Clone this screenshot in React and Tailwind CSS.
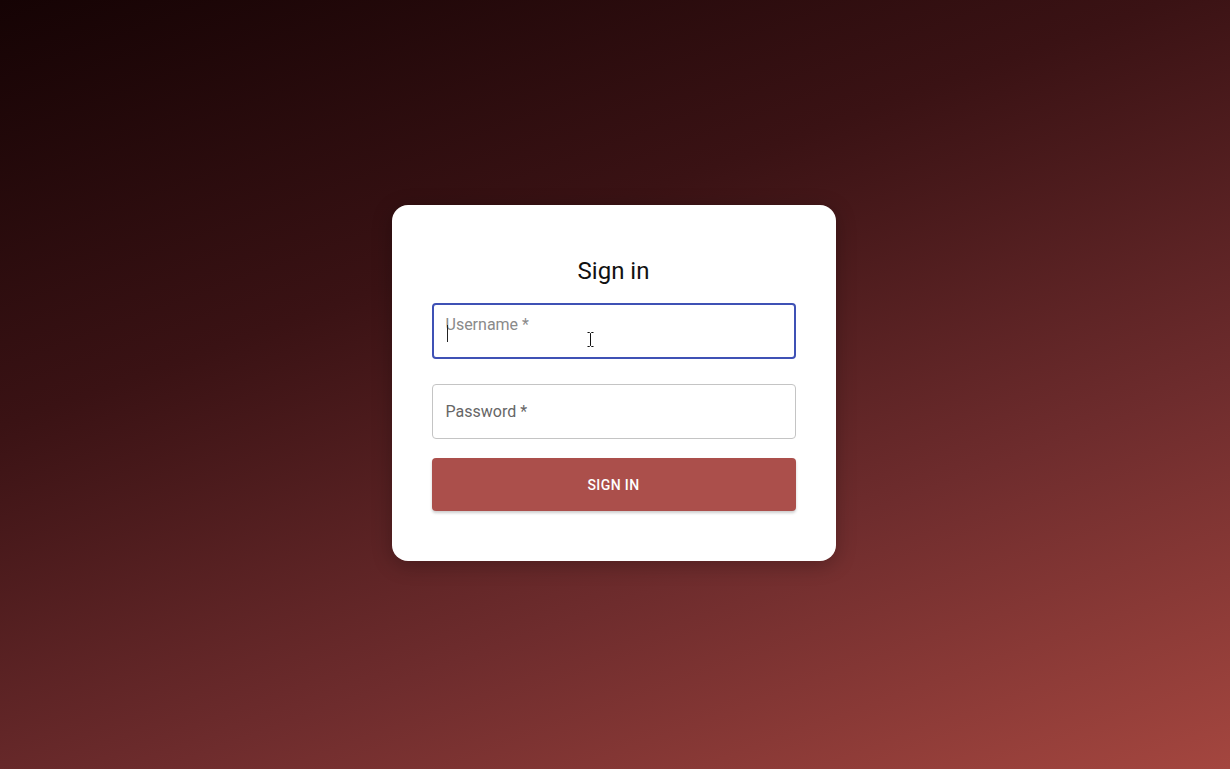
import React from "react";

const App = () => {
  return (
    <div
      className="w-full h-[769px] flex items-center justify-center pb-1 pr-[3px] bg-[linear-gradient(160deg,#150304_0%,#3a1214_35%,#6e2c2d_68%,#a4463f_100%)]"
      style={{ fontFamily: "Roboto, 'Liberation Sans', sans-serif" }}
    >
      <div className="w-[444px] h-[356px] bg-white rounded-2xl px-10 pt-[50px] flex flex-col shadow-[0_4px_20px_rgba(0,0,0,0.25)]">
        <h1 className="text-[24px] leading-8 text-center text-[#111] font-normal">Sign in</h1>

        {/* username (focused) */}
        <div className="relative mt-4 h-14 rounded border-2 border-[#3f51b5]">
          <span className="absolute left-[12px] top-[10px] text-[16px] leading-5 text-[#8a8a8a]">Username *</span>
          <span className="absolute left-[13px] top-[20px] w-px h-[17px] bg-[#222]" />
          <svg className="absolute left-[153px] top-[27px]" width="7" height="15" viewBox="0 0 7 15">
            <path d="M0.5 0.5h2l1 1 1-1h2M3.5 1.5v12M0.5 14.5h2l1-1 1 1h2" stroke="#111" fill="none" strokeWidth="1" />
          </svg>
        </div>

        <div className="relative mt-[25px] h-[55px] rounded border border-[#c4c4c4]">
          <span className="absolute left-[13px] top-[17px] text-[16px] leading-5 text-[#666]">Password *</span>
        </div>

        <button className="mt-[19px] h-[53px] pt-[3px] rounded bg-[#ab4f4b] text-white text-[14px] font-medium tracking-[0.4px] uppercase shadow-[0_2px_3px_rgba(0,0,0,0.2)]">
          Sign in
        </button>
      </div>
    </div>
  );
};

export default App;
